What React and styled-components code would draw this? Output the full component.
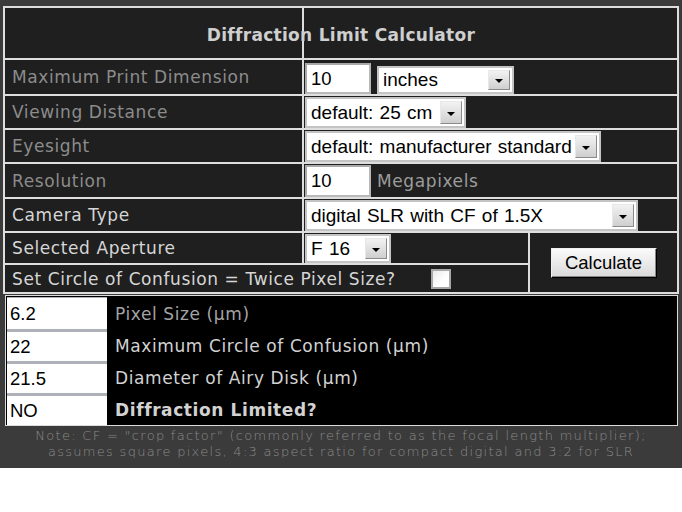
import React from "react";
import styled, { createGlobalStyle } from "styled-components";

const Global = createGlobalStyle`
  html, body {
    margin: 0;
    padding: 0;
    background: #fff;
  }
`;

const Page = styled.div`
  width: 682px;
  background: #3b3b3b;
  padding: 6px 3px 0 3px;
  box-sizing: border-box;
  font-family: "DejaVu Sans", Verdana, sans-serif;
`;

const Frame = styled.div`
  display: grid;
  grid-template-columns: 297px 224px 147px;
  grid-template-rows: 50px 34px 32px 32px 33px 32px 30px 27px;
  gap: 2px;
  padding: 2px;
  background: #dedede;
`;

const TitleCell = styled.div`
  grid-column: 1 / -1;
  display: flex;
  align-items: center;
  justify-content: center;
  padding-top: 3px;
  background: linear-gradient(
    to right,
    #1f1f1f 297px,
    #dedede 297px,
    #dedede 299px,
    #1f1f1f 299px
  );
  color: #cfcfcf;
  font-weight: bold;
  font-size: 17px;
  letter-spacing: 0.3px;
`;

const Label = styled.div`
  grid-column: ${(p) => p.$span || "auto"};
  display: flex;
  align-items: center;
  padding-left: 7px;
  background: #1f1f1f;
  color: ${(p) => (p.$bright ? "#d6d6d6" : "#8c8c8c")};
  font-size: 17px;
  letter-spacing: 0.6px;
`;

const Field = styled.div`
  grid-column: ${(p) => p.$span || "auto"};
  display: flex;
  align-items: flex-end;
  gap: 6px;
  padding: 1px 0 0 1px;
  background: #1f1f1f;
`;

const CalcCell = styled.div`
  grid-column: 3;
  grid-row: 7 / span 2;
  display: flex;
  align-items: center;
  justify-content: center;
  background: #1f1f1f;
`;

const TextBox = styled.div`
  width: ${(p) => p.$w}px;
  height: ${(p) => p.$h}px;
  box-sizing: border-box;
  border: 2px solid #b9b9b9;
  border-top-color: #a9a9a9;
  border-left-color: #a9a9a9;
  background: #fff;
  padding-left: 4px;
  display: flex;
  align-items: center;
  font-family: "Liberation Sans", Arial, sans-serif;
  font-size: 18.5px;
  color: #000;
`;

const SelectBox = styled(TextBox)`
  justify-content: space-between;
  padding: 2px;
  padding-left: 4px;
  border-color: #c4c4c4;
  white-space: nowrap;
  font-size: 19px;
  word-spacing: 1px;
`;

const ArrowBtn = styled.div`
  width: 22px;
  flex-shrink: 0;
  align-self: stretch;
  box-sizing: border-box;
  background: linear-gradient(#f2f2f2, #cfcfcf);
  border: 1px solid #e8e8e8;
  border-right-color: #8a8a8a;
  border-bottom-color: #8a8a8a;
  display: flex;
  align-items: center;
  justify-content: center;
  &::after {
    content: "";
    border-left: 4px solid transparent;
    border-right: 4px solid transparent;
    border-top: 4px solid #000;
    margin-top: 2px;
  }
`;

const Unit = styled.span`
  align-self: center;
  color: #9c9c9c;
  font-size: 17px;
  letter-spacing: 0.6px;
  font-weight: 500;
`;

const Check = styled.span`
  display: inline-block;
  flex-shrink: 0;
  width: 20px;
  height: 20px;
  margin-left: 35px;
  box-sizing: border-box;
  border: 2px solid #a8a8a8;
  background: linear-gradient(135deg, #eaeaea, #ffffff 60%);
`;

const Button = styled.button`
  width: 106px;
  height: 30px;
  background: linear-gradient(#fbfbfb, #d9d9d9);
  border: 1px solid #000;
  border-top-color: #f0f0f0;
  border-left-color: #f0f0f0;
  box-shadow: inset -1px -1px 0 #888;
  font-family: "Liberation Sans", Arial, sans-serif;
  font-size: 18.5px;
  color: #000;
  padding: 0;
`;

const Results = styled.div`
  margin: 1px 0 0 2px;
  width: 673px;
  box-sizing: border-box;
  border: 1px solid #dcdcdc;
  padding: 1px 0 0 1px;
  background: #000;
  display: grid;
  grid-template-columns: 100px 1fr;
  grid-auto-rows: 32px;
`;

const ResultValue = styled.div`
  background: #fff;
  border-top: 3px solid #aeb2b8;
  box-sizing: border-box;
  display: flex;
  align-items: center;
  padding-left: 3px;
  font-family: "Liberation Sans", Arial, sans-serif;
  font-size: 18.5px;
  color: #000;
  &:first-child {
    border-top-width: 1px;
  }
`;

const ResultLabel = styled.div`
  display: flex;
  align-items: center;
  padding-left: 8px;
  padding-top: 1px;
  font-size: 17px;
  letter-spacing: 0.6px;
  color: ${(p) => (p.$dim ? "#a3a3a3" : "#d2d2d2")};
  font-weight: ${(p) => (p.$bold ? "bold" : "normal")};
`;

const Note = styled.div`
  padding: 2px 0 8px;
  text-align: center;
  color: #8a8a8a;
  font-size: 13px;
  letter-spacing: 1.3px;
  font-weight: 200;
  line-height: 16px;
  white-space: nowrap;
`;

const Select = ({ w, h, children }) => (
  <SelectBox $w={w} $h={h}>
    <span>{children}</span>
    <ArrowBtn />
  </SelectBox>
);

const results = [
  { v: "6.2", l: "Pixel Size (\u03bcm)", dim: true },
  { v: "22", l: "Maximum Circle of Confusion (\u03bcm)" },
  { v: "21.5", l: "Diameter of Airy Disk (\u03bcm)" },
  { v: "NO", l: "Diffraction Limited?", bold: true },
];

const App = () => {
  return (
    <>
      <Global />
      <Page>
        <Frame>
          <TitleCell>Diffraction Limit Calculator</TitleCell>

          <Label>Maximum Print Dimension</Label>
          <Field $span="2 / span 2">
            <TextBox $w={66} $h={31}>10</TextBox>
            <Select w={137} h={28}>inches</Select>
          </Field>

          <Label>Viewing Distance</Label>
          <Field $span="2 / span 2">
            <Select w={161} h={31}>default: 25 cm</Select>
          </Field>

          <Label>Eyesight</Label>
          <Field $span="2 / span 2">
            <Select w={296} h={31}>default: manufacturer standard</Select>
          </Field>

          <Label>Resolution</Label>
          <Field $span="2 / span 2">
            <TextBox $w={66} $h={32}>10</TextBox>
            <Unit>Megapixels</Unit>
          </Field>

          <Label $bright>Camera Type</Label>
          <Field $span="2 / span 2">
            <Select w={333} h={31}>digital SLR with CF of 1.5X</Select>
          </Field>

          <Label $bright>Selected Aperture</Label>
          <Field>
            <Select w={86} h={29}>F 16</Select>
          </Field>
          <CalcCell>
            <Button>Calculate</Button>
          </CalcCell>

          <Label $bright $span="1 / span 2">
            Set Circle of Confusion = Twice Pixel Size?
            <Check />
          </Label>
        </Frame>

        <Results>
          {results.map((r) => (
            <React.Fragment key={r.v}>
              <ResultValue>{r.v}</ResultValue>
              <ResultLabel $dim={r.dim} $bold={r.bold}>
                {r.l}
              </ResultLabel>
            </React.Fragment>
          ))}
        </Results>

        <Note>
          Note: CF = "crop factor" (commonly referred to as the focal length
          multiplier);
          <br />
          assumes square pixels, 4:3 aspect ratio for compact digital and 3:2
          for SLR
        </Note>
      </Page>
    </>
  );
};

export default App;
